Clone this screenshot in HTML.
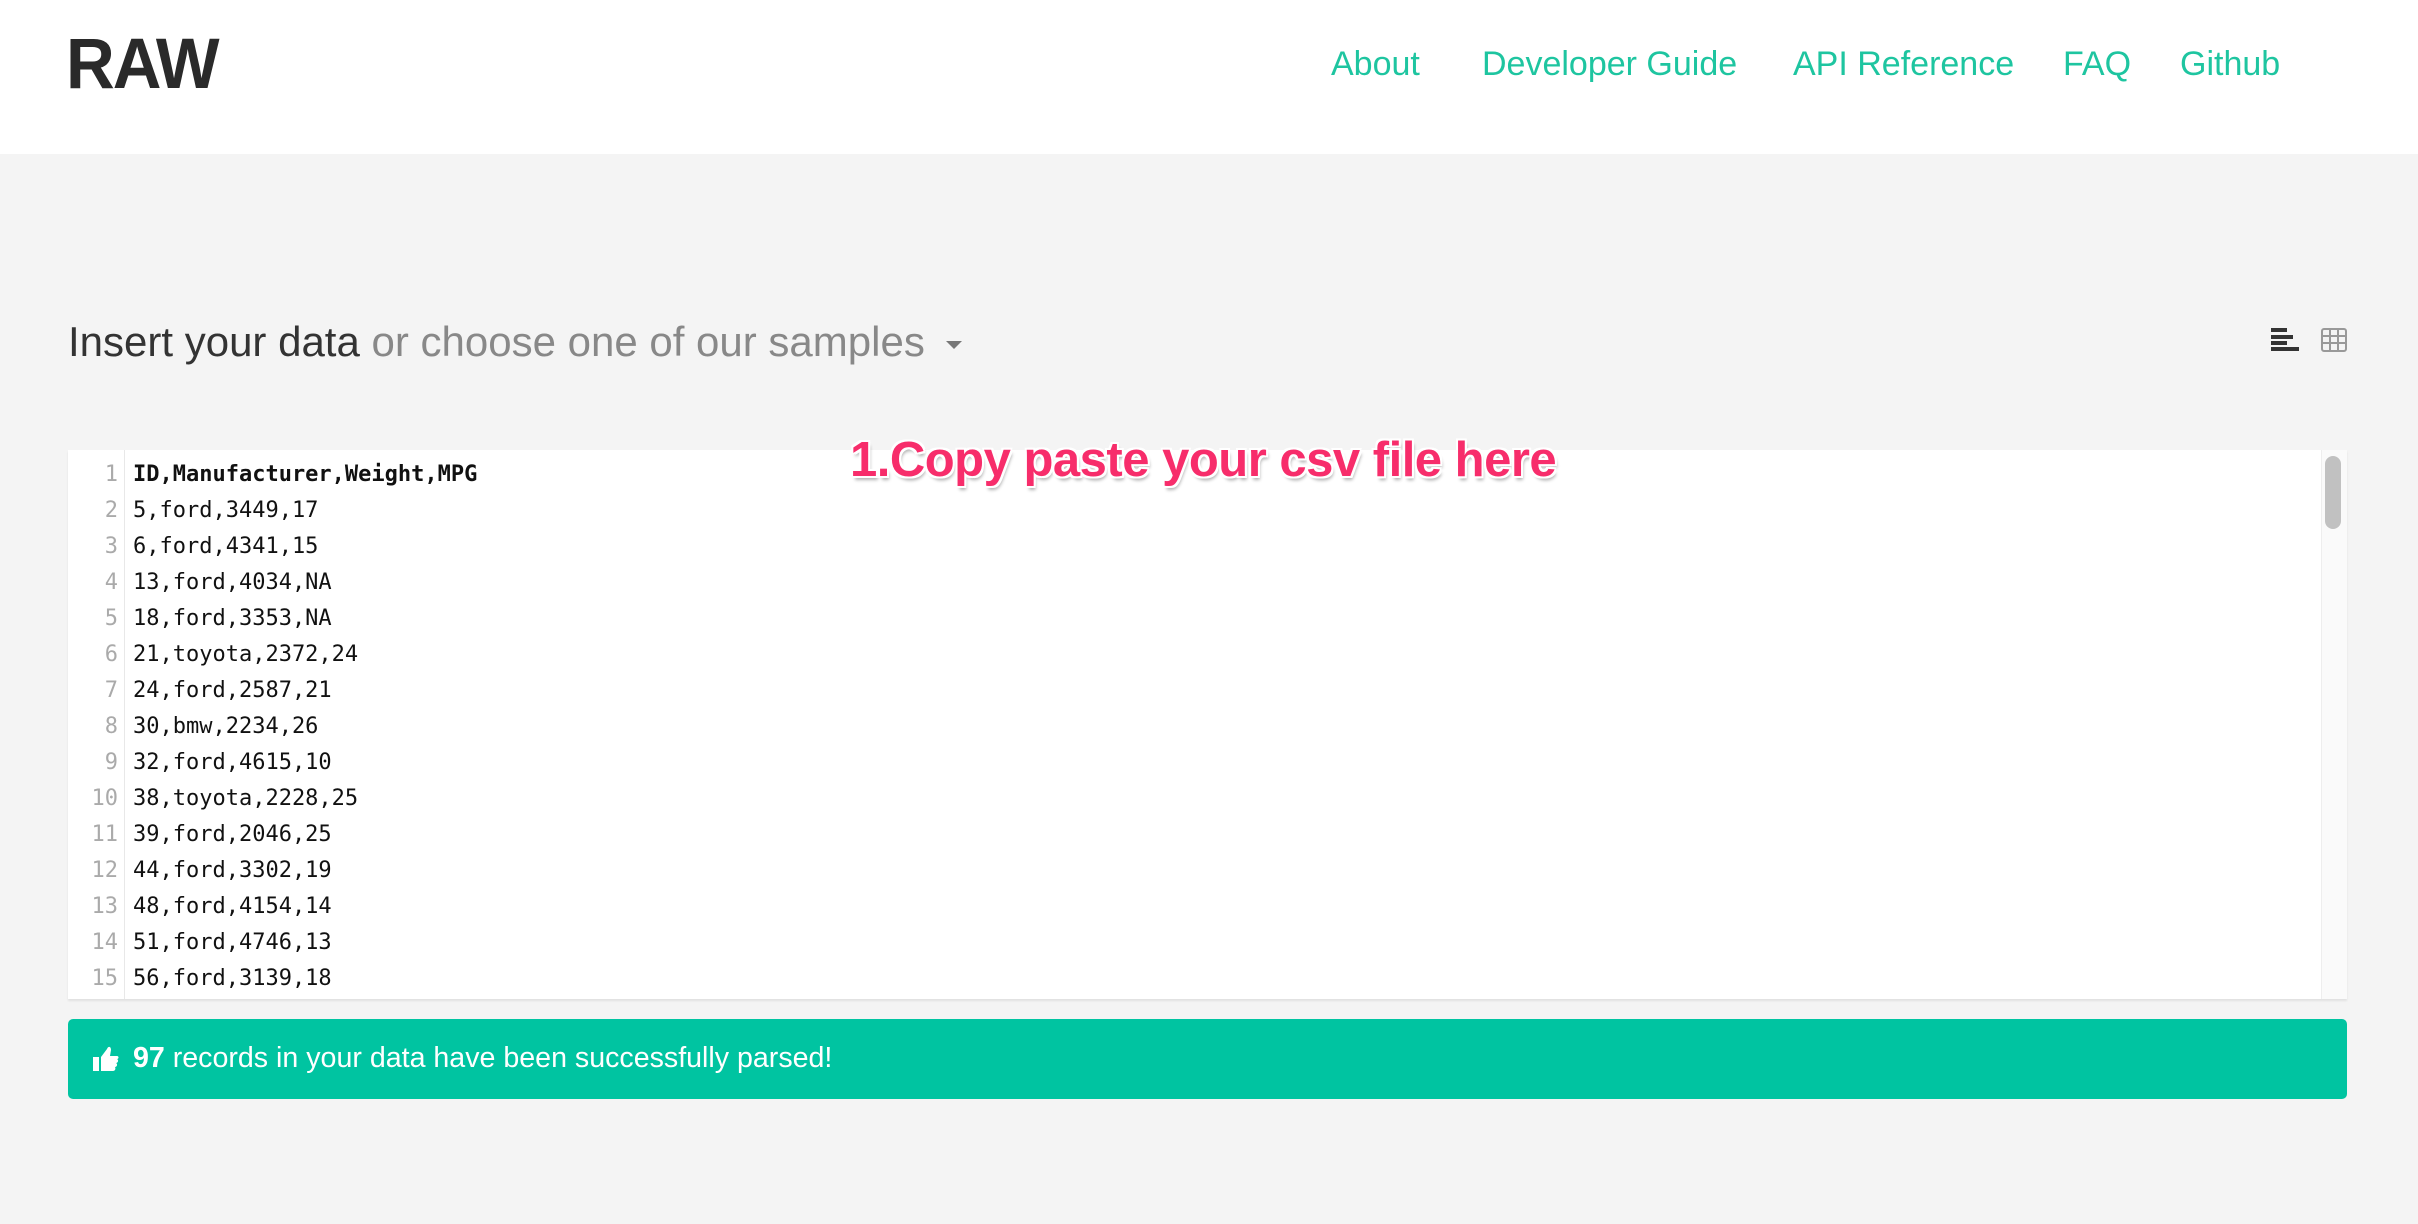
<!DOCTYPE html>
<html><head><meta charset="utf-8"><style>
*{margin:0;padding:0;box-sizing:border-box}
body{width:2418px;height:1224px;background:#f4f4f4;font-family:"Liberation Sans",sans-serif;position:relative;overflow:hidden}
.hdr{position:absolute;left:0;top:0;width:2418px;height:154px;background:#fff}
.logo{position:absolute;left:66px;top:24px;font-size:71px;font-weight:bold;color:#2a2a2a;letter-spacing:-2px;transform:scaleX(0.95);transform-origin:left}
.nav{position:absolute;top:45px;font-size:34px;color:#1ec5a0;white-space:nowrap}
.h{position:absolute;left:68px;top:318px;font-size:42px;color:#333;white-space:nowrap}
.h span{color:#888}
.ed{position:absolute;left:68px;top:450px;width:2279px;height:549px;background:#fff;box-shadow:0 2px 2px rgba(0,0,0,0.08);overflow:hidden}
.gut{position:absolute;left:0;top:0;width:57px;height:549px;border-right:1px solid #e8e8e8;background:#fff}
.ln{position:absolute;font-family:"DejaVu Sans Mono",monospace;font-size:22px;white-space:pre;line-height:36px}
.nums{left:68px;width:50px;text-align:right;color:#aaa;top:457px}
.code{left:133px;top:457px;color:#111}
.sb{position:absolute;left:2321px;top:450px;width:26px;height:549px;background:#fafafa;border-left:1px solid #eee}
.th{position:absolute;left:2325px;top:456px;width:16px;height:73px;border-radius:8px;background:#c1c1c1}
.ann{position:absolute;left:850px;top:432px;font-size:49px;font-weight:bold;color:#f72d6b;letter-spacing:-0.5px;white-space:nowrap;
text-shadow:2px 0 0 #fff,-2px 0 0 #fff,0 2px 0 #fff,0 -2px 0 #fff,2px 2px 0 #fff,-2px -2px 0 #fff,2px -2px 0 #fff,-2px 2px 0 #fff,2px 4px 3px rgba(0,0,0,0.3)}
.ok{position:absolute;left:68px;top:1019px;width:2279px;height:80px;background:#00c4a1;border-radius:5px;color:#fff;font-size:28.6px}
.ok .t{position:absolute;left:65px;top:23px;white-space:nowrap}
</style></head><body>
<div class="hdr">
<div class="logo">RAW</div>
<div class="nav" style="left:1331px">About</div>
<div class="nav" style="left:1482px">Developer Guide</div>
<div class="nav" style="left:1793px">API Reference</div>
<div class="nav" style="left:2063px">FAQ</div>
<div class="nav" style="left:2180px">Github</div>
</div>
<div class="h">Insert your data <span>or choose one of our samples</span></div>
<svg style="position:absolute;left:946px;top:341px" width="18" height="10"><path d="M0 0H16L8 8Z" fill="#777"/></svg>
<svg style="position:absolute;left:2271px;top:328px" width="30" height="24"><rect x="0" y="0" width="16" height="4" fill="#333"/><rect x="0" y="7" width="22" height="4" fill="#333"/><rect x="0" y="13" width="16" height="4" fill="#333"/><rect x="0" y="19" width="28" height="4" fill="#333"/></svg>
<svg style="position:absolute;left:2321px;top:328px" width="26" height="24"><rect x="1" y="1" width="24" height="22" rx="2" fill="none" stroke="#999" stroke-width="2"/><path d="M1 8H25M1 15H25M9 1V23M17 1V23" stroke="#999" stroke-width="2"/></svg>
<div class="ed"><div class="gut"></div></div>
<div class="ln nums">1
2
3
4
5
6
7
8
9
10
11
12
13
14
15</div>
<div class="ln code"><b>ID,Manufacturer,Weight,MPG</b>
5,ford,3449,17
6,ford,4341,15
13,ford,4034,NA
18,ford,3353,NA
21,toyota,2372,24
24,ford,2587,21
30,bmw,2234,26
32,ford,4615,10
38,toyota,2228,25
39,ford,2046,25
44,ford,3302,19
48,ford,4154,14
51,ford,4746,13
56,ford,3139,18</div>
<div class="sb"></div><div class="th"></div>
<div class="ann">1.Copy paste your csv file here</div>
<div class="ok">
<svg style="position:absolute;left:24px;top:26px" width="28" height="28" viewBox="0 0 28 28"><rect x="1" y="12" width="6" height="14" fill="#fff"/><path d="M9 12L15 4C16 1 19 1 19 5L18 11H25C27 11 27 14 25 14C27 15 26 18 24 18C26 19 25 22 23 22C24 24 23 26 21 26H9Z" fill="#fff"/></svg>
<div class="t"><b>97</b> records in your data have been successfully parsed!</div>
</div>
</body></html>
